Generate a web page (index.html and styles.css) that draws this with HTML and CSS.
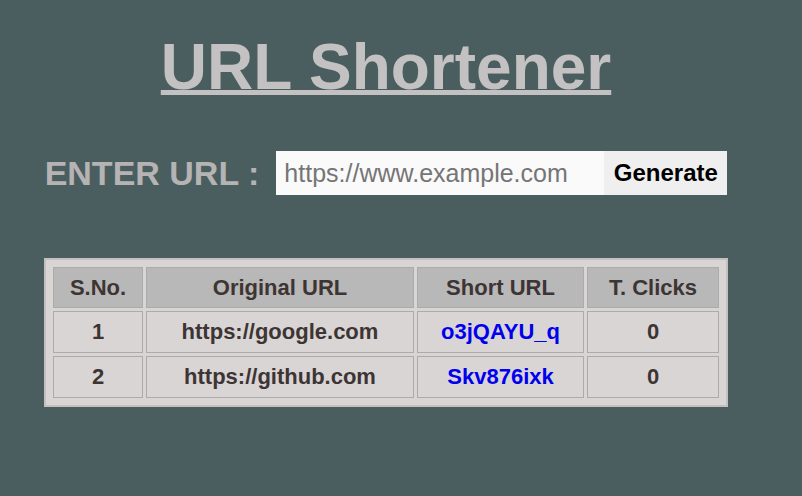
FILE: index.html
```html
<!DOCTYPE html>
<html lang="en">
<head>
<meta charset="utf-8">
<title>URL Shortener</title>
<link rel="stylesheet" href="styles.css">
</head>
<body>
<div class="page">
  <h1 class="title">URL Shortener</h1>
  <form class="url-form">
    <label class="url-label" for="url">ENTER URL :</label>
    <input class="url-input" id="url" type="text" placeholder="https://www.example.com">
    <button class="url-btn" type="button">Generate</button>
  </form>
  <div class="table-box">
    <table class="url-table">
      <thead>
        <tr>
          <th class="c-no">S.No.</th>
          <th class="c-orig">Original URL</th>
          <th class="c-short">Short URL</th>
          <th class="c-clicks">T. Clicks</th>
        </tr>
      </thead>
      <tbody>
        <tr>
          <td>1</td>
          <td>https://google.com</td>
          <td><a class="short-link" href="#">o3jQAYU_q</a></td>
          <td>0</td>
        </tr>
        <tr>
          <td>2</td>
          <td>https://github.com</td>
          <td><a class="short-link" href="#">Skv876ixk</a></td>
          <td>0</td>
        </tr>
      </tbody>
    </table>
  </div>
</div>
</body>
</html>
```

FILE: styles.css
```css
html, body {
  margin: 0;
  padding: 0;
}
body {
  background: #4a5e60;
  font-family: "Liberation Sans", Arial, sans-serif;
}
.page {
  width: 772px;
  display: flex;
  flex-direction: column;
  align-items: center;
  padding-top: 30px;
}
.title {
  margin: 0;
  font-size: 64px;
  line-height: 74px;
  font-weight: 700;
  color: #c3c1c1;
  text-decoration: underline;
  text-decoration-thickness: 5px;
  text-underline-offset: 1px;
}
.url-form {
  margin: 47px 0 0;
  display: flex;
  align-items: center;
}
.url-label {
  font-size: 34px;
  font-weight: 700;
  color: #b5b3b3;
  margin-right: 17px;
}
.url-input {
  box-sizing: border-box;
  width: 328px;
  height: 44px;
  border: none;
  outline: none;
  background: #fafafa;
  padding: 0 8px;
  font-family: "Liberation Sans", Arial, sans-serif;
  font-size: 25px;
  color: #222;
}
.url-input::placeholder {
  color: #757575;
}
.url-btn {
  box-sizing: border-box;
  width: 123px;
  height: 44px;
  border: none;
  background: #efefef;
  font-family: "Liberation Sans", Arial, sans-serif;
  font-size: 24px;
  font-weight: 700;
  color: #000;
  padding: 0;
}
.table-box {
  margin-top: 63px;
  background: #d9d5d5;
  border: 2px solid #c4c0c0;
  padding: 4px;
}
.url-table {
  border-collapse: separate;
  border-spacing: 3px;
  font-size: 22px;
  font-weight: 700;
  color: #3d3434;
}
.url-table th,
.url-table td {
  border: 1px solid #ababab;
  text-align: center;
  padding: 0;
  box-sizing: border-box;
}
.url-table th {
  background: #b8b8b8;
  height: 41px;
}
.url-table td {
  height: 42px;
}
.c-no { width: 90px; }
.c-orig { width: 268px; }
.c-short { width: 167px; }
.c-clicks { width: 132px; }
.short-link {
  color: #0000ee;
  text-decoration: none;
}
```
